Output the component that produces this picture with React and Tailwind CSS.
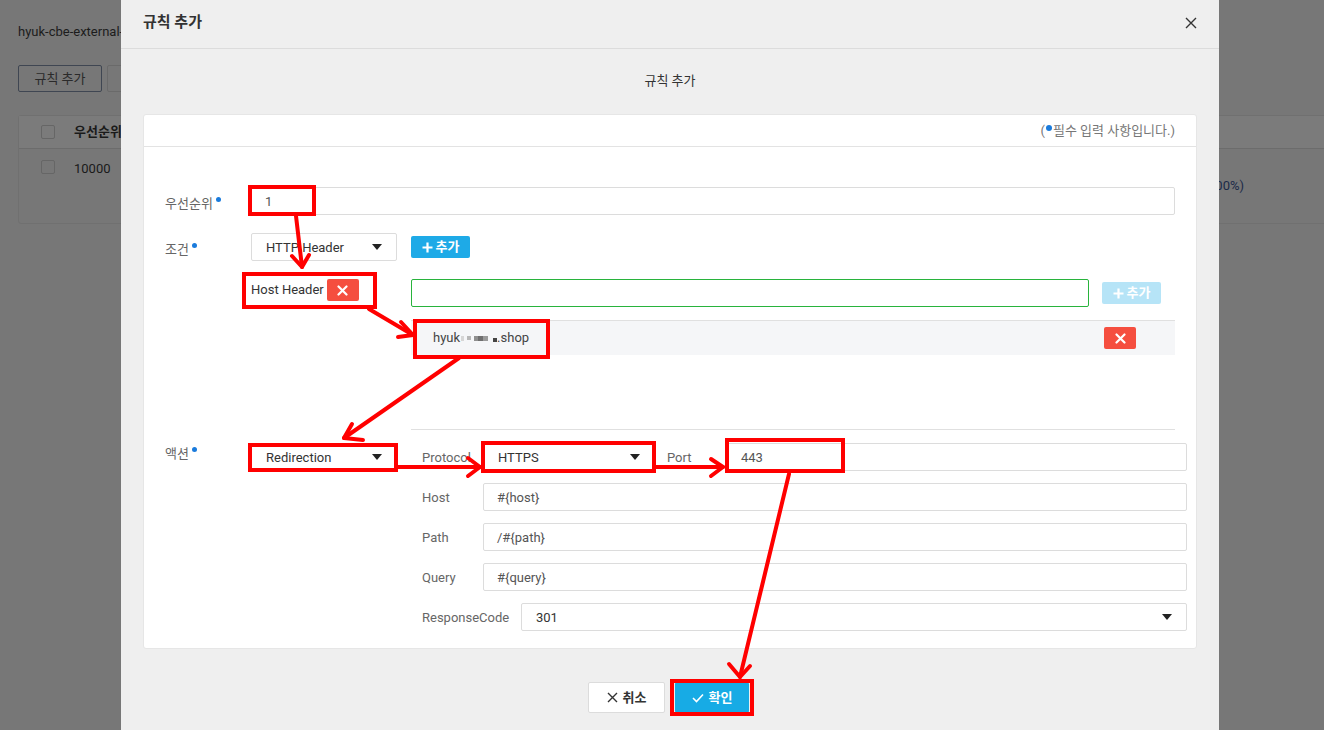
import React from 'react';

const Dot = () => (
    <span className="inline-block w-[5px] h-[5px] rounded-full bg-[#1a7bdc] ml-[3px] relative -top-[6px]" />
);

const Caret = () => (
    <svg width="10" height="6" viewBox="0 0 10 6" className="shrink-0">
        <path d="M0 0 L10 0 L5 6 Z" fill="#222" />
    </svg>
);

const Select = ({ value, className = '' }) => (
    <div className={`h-[28px] bg-white border border-[#dcdcdc] rounded-[2px] flex items-center justify-between pl-[14px] pr-[14px] text-[13px] text-[#333] ${className}`}>
        <span className="pt-[1px]">{value}</span>
        <Caret />
    </div>
);

const Input = ({ value, className = '' }) => (
    <div className={`h-[28px] bg-white border border-[#dcdcdc] rounded-[2px] flex items-center pl-[13px] pt-[1px] text-[13px] text-[#555] ${className}`}>
        {value}
    </div>
);

const RedX = ({ className = '' }) => (
    <div className={`w-[32px] h-[22px] rounded-[2px] bg-[#f54e3f] flex items-center justify-center ${className}`}>
        <svg width="11" height="11" viewBox="0 0 11 11">
            <path d="M1.5 1.5 L9.5 9.5 M9.5 1.5 L1.5 9.5" stroke="#fff" strokeWidth="2.2" strokeLinecap="round" />
        </svg>
    </div>
);

const AddBtn = ({ light }) => (
    <div className={`w-[59px] h-[22px] rounded-[2px] flex items-center justify-center gap-[3px] text-white text-[13px] font-bold ${light ? 'bg-[#b6e4f7]' : 'bg-[#1eaae7]'}`}>
        <svg width="11" height="11" viewBox="0 0 11 11">
            <path d="M5.5 0.5 V10.5 M0.5 5.5 H10.5" stroke="#fff" strokeWidth="2.2" />
        </svg>
        <span>추가</span>
    </div>
);

const Arrow = ({ x1, y1, x2, y2, w1, w2 }) => (
    <g stroke="#ff0000" strokeWidth="4" fill="none" strokeLinecap="round" strokeLinejoin="round">
        <line x1={x1} y1={y1} x2={x2} y2={y2} />
        <polyline points={`${w1[0]},${w1[1]} ${x2},${y2} ${w2[0]},${w2[1]}`} />
    </g>
);

const SubRow = ({ label, labelW = 'w-[61px]', children }) => (
    <div className="flex items-center h-[28px]">
        <div className={`${labelW} shrink-0 text-[13px] text-[#666] pt-[1px]`}>{label}</div>
        {children}
    </div>
);

// masked host name, as in the screenshot
const MaskedHost = () => (
    <span className="flex items-center text-[13px] text-[#444]">
        <span>hyuk</span>
        <span className="inline-block w-[3px] h-[5px] bg-[#d6d6d6] ml-[1px]" />
        <span className="inline-block w-[4px] h-[4px] bg-[#b8b8b8] ml-[3px]" />
        <span className="inline-block w-[4px] h-[5px] bg-[#8f8f8f] ml-[3px]" />
        <span className="inline-block w-[5px] h-[5px] bg-[#6f6f6f]" />
        <span className="inline-block w-[5px] h-[5px] bg-[#9a9a9a]" />
        <span className="inline-block w-[4px] h-[4px] bg-[#444] ml-[5px] mt-[4px]" />
        <span>.shop</span>
    </span>
);

const App = () => {
    return (
        <div className="relative w-[1324px] h-[730px] overflow-hidden bg-[#777] font-[family-name:Roboto,'Noto_Sans_CJK_KR',sans-serif]">
            {/* page behind the dialog */}
            <div className="pl-[18px] pt-[23px] text-[#1c1c1c]">
                <div className="text-[13px] leading-[18px]">hyuk-cbe-external-lb</div>
                <div className="flex gap-[5px] mt-[24px]">
                    <div className="w-[84px] h-[27px] border border-[#3f4652] rounded-[2px] flex items-center justify-center text-[13px] text-[#2a2a2a]">규칙 추가</div>
                    <div className="w-[84px] h-[27px] border border-[#6a6a6a] rounded-[2px]" />
                </div>
                <div className="mt-[23px] mr-[-40px] rounded-[3px] border border-[#707070]">
                    <div className="h-[33px] bg-[#7b7b7b] border-b border-[#6c6c6c] flex items-center">
                        <div className="w-[14px] h-[14px] border border-[#666] rounded-[2px] ml-[22px]" />
                        <div className="ml-[19px] text-[13px] font-bold text-[#1a1a1a]">우선순위</div>
                    </div>
                    <div className="h-[74px] flex justify-between">
                        <div className="flex items-start pt-[11px]">
                            <div className="w-[14px] h-[14px] border border-[#666] rounded-[2px] ml-[22px]" />
                            <div className="ml-[19px] text-[13px] text-[#1a1a1a] -mt-[1px]">10000</div>
                        </div>
                        <div className="self-center text-[13px] text-[#1b2a48] mr-[119px]">redirect (100%)</div>
                    </div>
                </div>
            </div>

            {/* dialog */}
            <div className="absolute left-[121px] top-0 w-[1098px] h-[730px] bg-[#efefef] flex flex-col">
                <div className="h-[49px] shrink-0 border-b border-[#dcdcdc] flex items-center justify-between pl-[22px] pr-[22px]">
                    <div className="text-[15px] font-bold text-[#333] -mt-[4px]">규칙 추가</div>
                    <svg width="12" height="12" viewBox="0 0 12 12" className="-mt-[2px]">
                        <path d="M1 1 L11 11 M11 1 L1 11" stroke="#333" strokeWidth="1.4" />
                    </svg>
                </div>

                <div className="px-[22px]">
                    <div className="pt-[23px] pb-[24px] text-center text-[13px] leading-[18px] text-[#333]">규칙 추가</div>

                    <div className="bg-white rounded-[3px] border border-[#e6e6e6]">
                        <div className="h-[32px] border-b border-[#e3e3e3] flex items-center justify-end pr-[21px] text-[13px] text-[#777]">
                            (<span className="inline-block w-[6px] h-[6px] rounded-full bg-[#1a7bdc] mx-[1px] relative -top-[3px]" />필수 입력 사항입니다.)
                        </div>

                        <div className="pt-[40px] pb-[17px] pl-[21px]">
                            {/* 우선순위 */}
                            <div className="flex items-center h-[28px] pr-[21px]">
                                <div className="w-[85px] shrink-0 text-[13px] text-[#666] pt-[5px]">우선순위<Dot /></div>
                                <Input value="1" className="flex-1 pl-[14px]" />
                            </div>

                            {/* 조건 */}
                            <div className="flex items-start mt-[18px] pr-[21px]">
                                <div className="w-[85px] shrink-0 text-[13px] leading-[28px] text-[#666] pt-[3px]">조건<Dot /></div>
                                <div className="flex-1">
                                    <div className="flex items-center">
                                        <Select value="HTTP Header" className="w-[146px] ml-[1px]" />
                                        <div className="ml-[14px]">
                                            <AddBtn />
                                        </div>
                                    </div>
                                    <div className="flex mt-[18px]">
                                        <div className="w-[161px] shrink-0 flex items-center h-[22px] pl-[1px]">
                                            <span className="text-[13px] text-[#333]">Host Header</span>
                                            <RedX className="ml-[3px]" />
                                        </div>
                                        <div className="flex-1">
                                            <div className="flex items-center">
                                                <div className="flex-1 h-[28px] border border-[#28b33c] rounded-[2px] bg-white" />
                                                <div className="ml-[13px] mr-[14px]">
                                                    <AddBtn light />
                                                </div>
                                            </div>
                                            <div className="mt-[13px] h-[110px] border-t border-b border-[#e0e0e0]">
                                                <div className="h-[34px] bg-[#f5f6f8] flex items-center justify-between pl-[22px] pr-[39px]">
                                                    <MaskedHost />
                                                    <RedX />
                                                </div>
                                            </div>
                                        </div>
                                    </div>
                                </div>
                            </div>

                            {/* 액션 */}
                            <div className="flex items-start mt-[13px] pr-[9px]">
                                <div className="w-[85px] shrink-0 text-[13px] leading-[22px] text-[#666]">액션<Dot /></div>
                                <Select value="Redirection" className="w-[146px] ml-[1px] shrink-0" />
                                <div className="flex-1 ml-[25px] flex flex-col gap-[12px]">
                                    <SubRow label="Protocol">
                                        <Select value="HTTPS" className="w-[172px] shrink-0" />
                                        <div className="w-[72px] shrink-0 pl-[12px] pt-[1px] text-[13px] text-[#666]">Port</div>
                                        <Input value="443" className="flex-1" />
                                    </SubRow>
                                    <SubRow label="Host">
                                        <Input value="#{host}" className="flex-1" />
                                    </SubRow>
                                    <SubRow label="Path">
                                        <Input value="/#{path}" className="flex-1" />
                                    </SubRow>
                                    <SubRow label="Query">
                                        <Input value="#{query}" className="flex-1" />
                                    </SubRow>
                                    <SubRow label="ResponseCode" labelW="w-[99px]">
                                        <Select value="301" className="flex-1" />
                                    </SubRow>
                                </div>
                            </div>
                        </div>
                    </div>

                    <div className="flex justify-center gap-[10px] mt-[33px] pr-[3px]">
                        <div className="w-[77px] h-[31px] bg-white border border-[#dcdcdc] rounded-[2px] flex items-center justify-center gap-[5px] text-[13px] font-bold text-[#333]">
                            <svg width="11" height="11" viewBox="0 0 11 11">
                                <path d="M1 1 L10 10 M10 1 L1 10" stroke="#333" strokeWidth="1.4" />
                            </svg>
                            <span>취소</span>
                        </div>
                        <div className="w-[74px] h-[31px] bg-[#17abe5] rounded-[2px] flex items-center justify-center gap-[5px] text-[13px] font-bold text-white">
                            <svg width="12" height="10" viewBox="0 0 12 10">
                                <path d="M1 5 L4.5 8.5 L11 1.5" stroke="#fff" strokeWidth="1.6" fill="none" />
                            </svg>
                            <span>확인</span>
                        </div>
                    </div>
                </div>
            </div>

            {/* red annotation marks over the dialog */}
            <svg className="absolute inset-0 pointer-events-none" width="1324" height="730">
                <g stroke="#ff0000" strokeWidth="4" fill="none">
                    <rect x="250" y="187" width="64" height="27" />
                    <rect x="244" y="274" width="131" height="33" />
                    <rect x="415" y="321" width="133" height="36" />
                    <rect x="250" y="445" width="146" height="25" />
                    <rect x="483" y="443" width="171" height="28" />
                    <rect x="727" y="440" width="116" height="31" />
                    <rect x="672" y="681" width="80" height="33" />
                </g>
                <Arrow x1={296} y1={216} x2={302} y2={267} w1={[292, 256]} w2={[309, 255]} />
                <Arrow x1={369} y1={309} x2={413} y2={335} w1={[401, 322]} w2={[398, 337]} />
                <Arrow x1={459} y1={358} x2={344} y2={438} w1={[352, 424]} w2={[363, 440]} />
                <Arrow x1={398} y1={467} x2={480} y2={467} w1={[468, 458]} w2={[468, 476]} />
                <Arrow x1={656} y1={467} x2={723} y2={467} w1={[711, 459]} w2={[711, 476]} />
                <Arrow x1={789} y1={474} x2={740} y2={677} w1={[729, 664]} w2={[750, 666]} />
            </svg>
        </div>
    );
};

export default App;
